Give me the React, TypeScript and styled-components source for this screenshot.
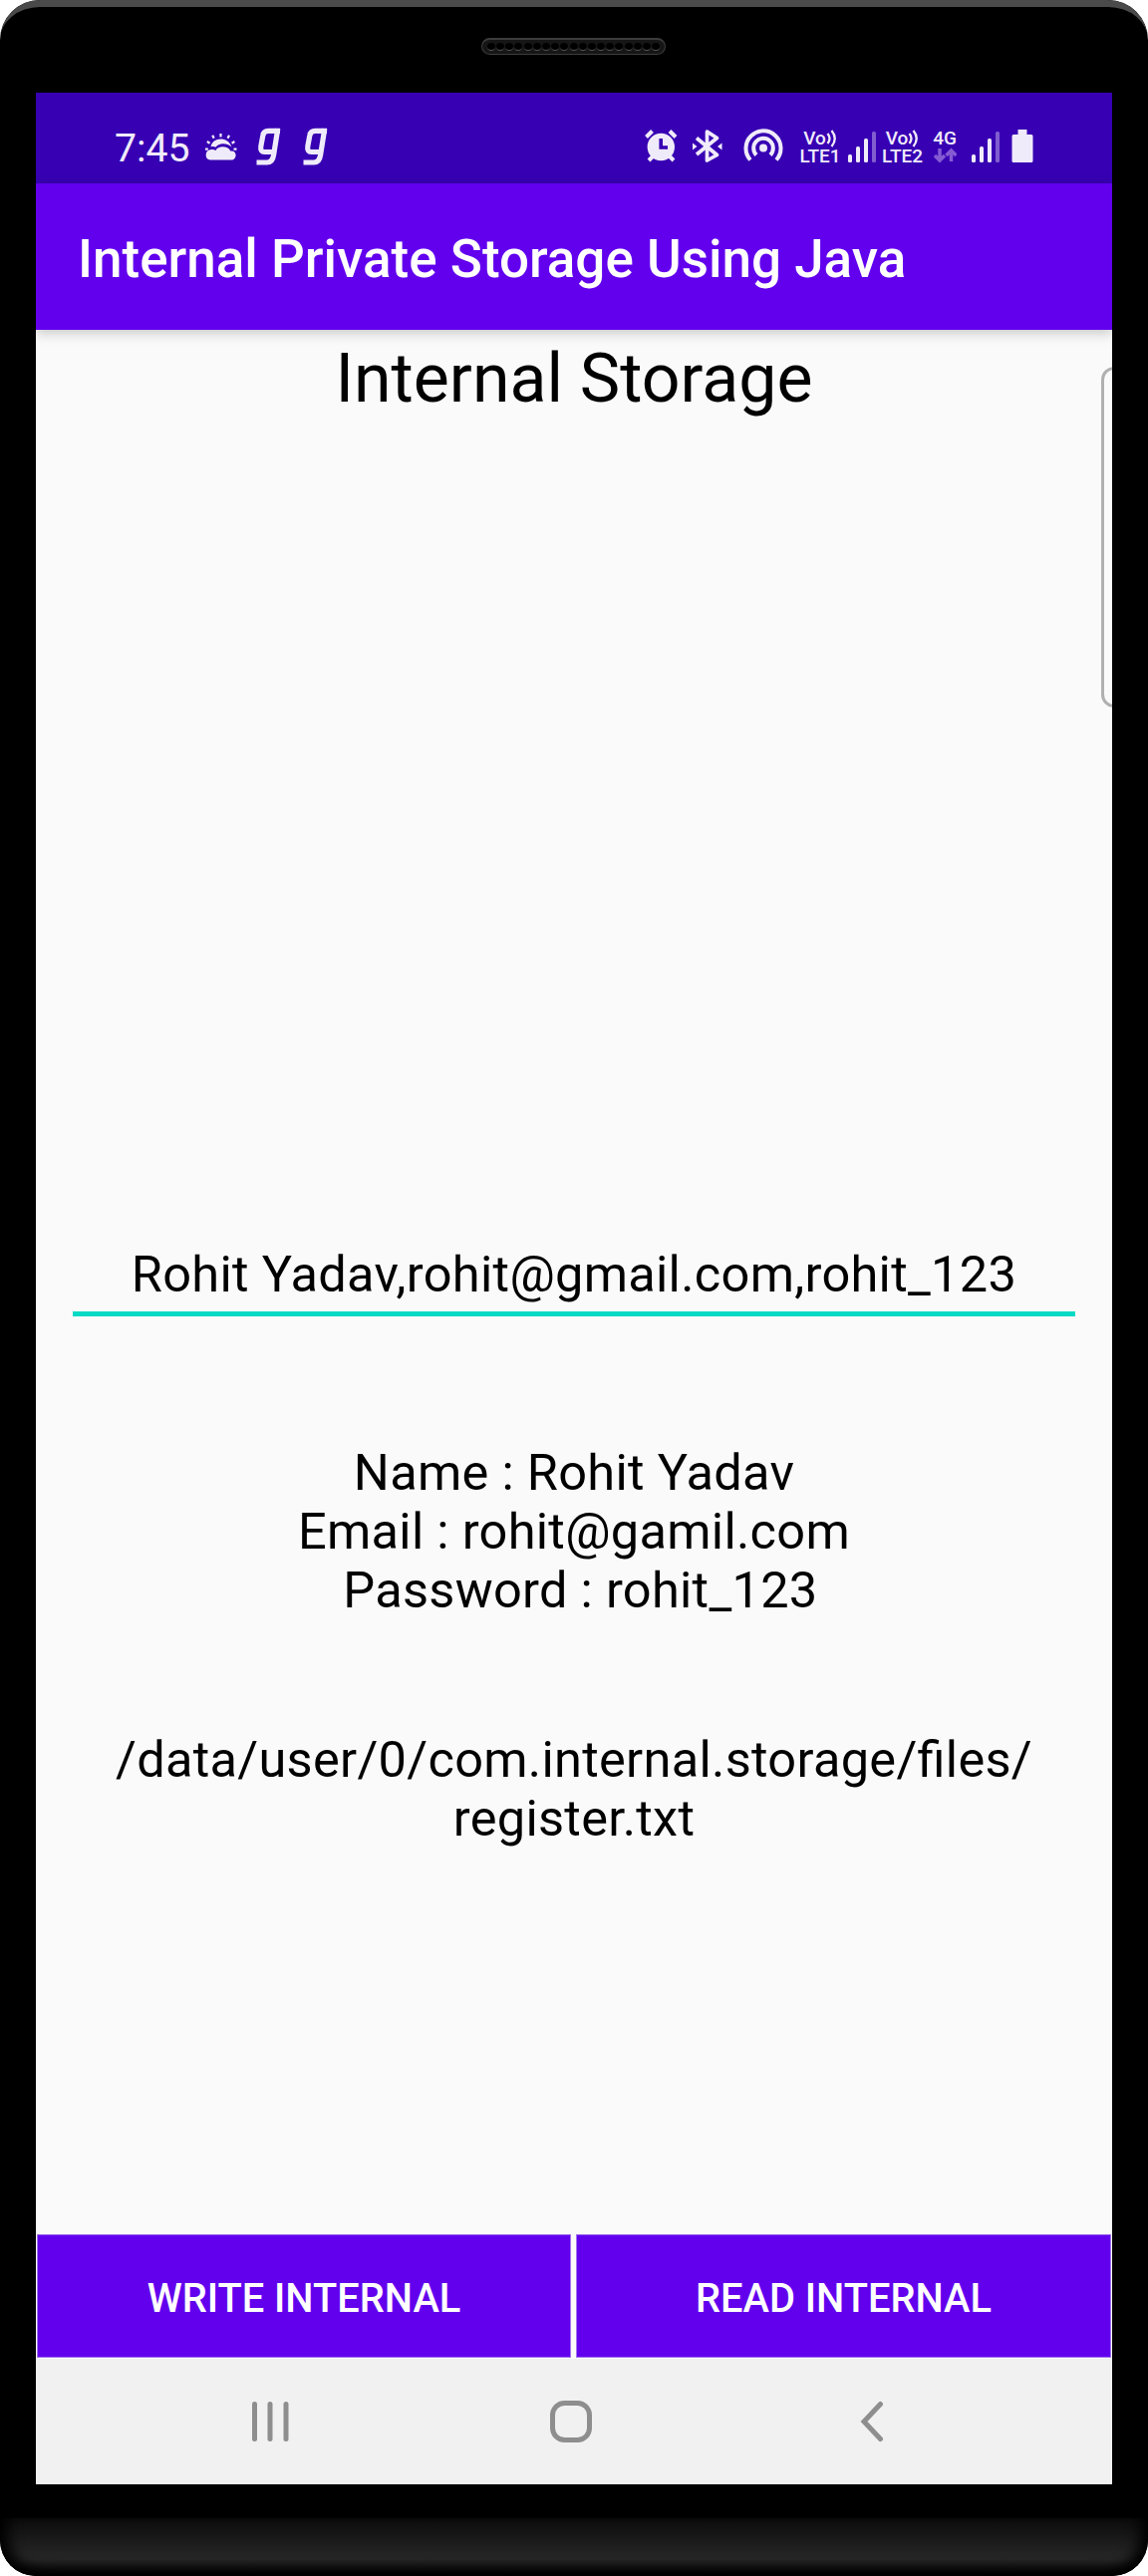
import React from 'react';
import styled, { createGlobalStyle } from 'styled-components';

const GlobalStyle = createGlobalStyle`
  * { box-sizing: border-box; }
  body { margin: 0; background: #fff; font-family: Roboto, "Liberation Sans", sans-serif; }
  svg { display: block; flex: none; }
`;

const ink = '#f0ebfa';

const Device = styled.div`
  width: 1152px;
  height: 2585px;
  display: flex;
  flex-direction: column;
  border-radius: 40px 40px 36px 36px;
  background: #000;
  overflow: hidden;
`;

const TopBezel = styled.div`
  height: 93px;
  flex: none;
  display: flex;
  justify-content: center;
  padding: 31px 1px 0 0;
  border-top: 7px solid #4a4a4a;
  border-radius: 40px 40px 0 0;
`;

const Speaker = styled.div`
  width: 185px;
  height: 17px;
  display: flex;
  align-items: center;
  justify-content: center;
  gap: 1.2px;
  border-radius: 9px;
  background: #161616;
  border: 1px solid #3c3c3c;
  border-top-width: 2px;
`;

const Hole = styled.span`
  width: 8px;
  height: 8px;
  border-radius: 50%;
  background: #000;
  border-bottom: 1px solid #555;
`;

const Screen = styled.main`
  height: 2400px;
  flex: none;
  margin: 0 36px;
  display: flex;
  flex-direction: column;
  background: #fafafa;
`;

const StatusBar = styled.div`
  height: 91px;
  flex: none;
  display: flex;
  align-items: flex-start;
  justify-content: space-between;
  padding: 35px 79px 0 79px;
  background: #3700b3;
  color: ${ink};
`;

const StatusGroup = styled.div`
  display: flex;
  align-items: flex-start;
`;

const Clock = styled.span`
  width: 77px;
  font-size: 39.2px;
  line-height: 40px;
  padding-top: 1px;
  white-space: nowrap;
`;

const Glyph = styled.svg<{ $gap?: number }>`
  margin-left: ${(p) => p.$gap ?? 0}px;
`;

const Carrier = styled.div<{ $gap: number; $width: number }>`
  width: ${(p) => p.$width}px;
  margin-left: ${(p) => p.$gap}px;
  display: flex;
  flex-direction: column;
  align-items: center;
  font-weight: 500;
  font-size: 19px;
  line-height: 17.5px;
  padding-top: 2px;
  white-space: nowrap;
`;

const VoRow = styled.span`
  display: flex;
`;

const AppBar = styled.header`
  height: 147px;
  flex: none;
  display: flex;
  align-items: center;
  padding: 4px 0 0 42px;
  background: #6200ee;
  color: #fff;
  box-shadow: 0 3px 12px rgba(0, 0, 0, 0.22);
  z-index: 1;
`;

const BarTitle = styled.h1`
  margin: 0;
  font-size: 53px;
  font-weight: 500;
  white-space: nowrap;
`;

const Content = styled.section`
  flex: 1;
  position: relative;
  display: flex;
  flex-direction: column;
  align-items: center;
  overflow: hidden;
  color: #000;
  text-align: center;
  font-size: 50.5px;
  line-height: 59px;
  letter-spacing: 0.3px;
  font-feature-settings: "liga" 1;
`;

const EdgeHandle = styled.div`
  position: absolute;
  top: 37px;
  right: -20px;
  width: 31px;
  height: 342px;
  border: 3px solid #b0b0b0;
  border-radius: 13px;
`;

const Heading = styled.h2`
  margin: 9px 0 0;
  font-size: 68px;
  font-weight: 400;
  line-height: 80px;
  letter-spacing: 0;
`;

const Field = styled.div`
  width: 1006px;
  height: 75px;
  margin-top: 826px;
  padding-top: 3px;
  border-bottom: 5px solid #03dac5;
`;

const Details = styled.div`
  margin-top: 127px;
  white-space: pre;
`;

const FilePath = styled.div`
  margin-top: 111px;
`;

const Actions = styled.div`
  height: 125px;
  flex: none;
  display: grid;
  grid-template-columns: 536px 537px;
  gap: 5px;
  padding: 0 1px 1px;
`;

const Action = styled.button`
  margin: 0;
  padding: 4px 0 0;
  border: 1px solid #a274ee;
  background: #6200ee;
  color: #fff;
  font: 500 39.8px Roboto, sans-serif;
`;

const NavBar = styled.nav`
  height: 126px;
  flex: none;
  display: flex;
  align-items: center;
  padding-left: 216px;
  background: #f1f1f1;
  color: #8e8e8e;
`;

const Chin = styled.div`
  height: 58px;
  flex: none;
  margin-top: 34px;
  border-radius: 0 0 36px 36px;
  background: linear-gradient(#0b0b0b 0%, #242424 62%, #242424 72%, #000 100%);
  box-shadow: inset 14px -6px 14px -6px #000, inset -14px -6px 14px -6px #000;
`;

const GLogo = ({ gap }: { gap: number }) => (
  <Glyph $gap={gap} width="26" height="38" viewBox="0 0 26 38" fill="none" stroke={ink} strokeWidth="5.2">
    <path d="M25 3.4H13.5Q8.5 3.4 7.8 8L5.8 19Q5 24.5 9.5 24.5H17.5M22.8 1L18.6 27.5Q17.5 35 12 35H1.5" />
  </Glyph>
);

const Signal = ({ gap }: { gap: number }) => (
  <Glyph $gap={gap} width="28" height="38" viewBox="0 0 28 38" fill={ink}>
    <rect x="0" y="27" width="4" height="8" rx="1.5" />
    <rect x="8" y="19" width="4" height="16" rx="1.5" />
    <rect x="16" y="11" width="4" height="24" rx="1.5" />
    <rect x="24" y="4" width="4" height="31" rx="1.5" opacity=".4" />
  </Glyph>
);

const VoLte = ({ sim, gap, width }: { sim: number; gap: number; width: number }) => (
  <Carrier $gap={gap} $width={width}>
    <VoRow>
      Vo
      <svg width="11" height="18" viewBox="0 0 11 18" fill="none" stroke={ink} strokeWidth="2.3">
        <path d="M1.5 4Q5.5 9 1.5 14M5.500 1Q12 9 5.500 17" />
      </svg>
    </VoRow>
    <span>LTE{sim}</span>
  </Carrier>
);

export default function App() {
  return (
    <>
      <GlobalStyle />
      <Device>
        <TopBezel>
          <Speaker>
            {Array.from({ length: 19 }, (_, i) => <Hole key={i} />)}
          </Speaker>
        </TopBezel>
        <Screen>
          <StatusBar>
            <StatusGroup>
              <Clock>7:45</Clock>
              <Glyph $gap={14} width="33" height="38" viewBox="0 0 33 38" fill={ink}>
                <path d="M5.500 19.500C7 9 23 8.500 26.500 19.500C21 14.500 13 15.500 10.500 19.800C9 18.800 7 18.900 5.500 19.500Z" />
                <path d="M5 32.500C-.8 32.500-.8 22.800 5 22.300C7 21.800 9 22 10.500 23C12.500 18 23 18 25.200 23.500C32.500 22.500 32 32.500 26 32.500Z" />
                <path
                  d="M15.500 6v3.600M7.200 7.800l1.500 3M24 7.800l-1.500 3M1.800 14l2.800 1.700M29.400 14l-2.800 1.700M-.2 21.700h3M28.500 21.700h3"
                  stroke={ink}
                  strokeWidth="2.200"
                />
              </Glyph>
              <GLogo gap={17} />
              <GLogo gap={21} />
            </StatusGroup>
            <StatusGroup>
              <Glyph width="33" height="38" viewBox="0 0 33 38">
                <circle cx="16.300" cy="19.500" r="13.700" fill={ink} />
                <path d="M1.500 9.500l6-6M31 9.500l-6-6M4 33l5-5M29 33l-5-5" fill="none" stroke={ink} strokeWidth="4" />
                <path d="M16.200 11v9H23" fill="none" stroke="#3700b3" strokeWidth="3.600" />
              </Glyph>
              <Glyph $gap={15} width="30" height="38" viewBox="0 0 30 38" fill="none" stroke={ink} strokeWidth="3.700">
                <path d="M4 10.500L24.500 27.500L14.500 33V4L24.500 10.500L4 27" strokeLinejoin="round" />
                <path d="M0 15.500l4.500 3.500L0 22.500ZM29.500 15.500L25 19l4.500 3.500Z" fill={ink} stroke="none" />
              </Glyph>
              <Glyph $gap={21} width="40" height="38" viewBox="0 0 40 38" fill="none" stroke={ink} strokeWidth="4">
                <circle cx="20" cy="20.500" r="4" fill={ink} stroke="none" />
                <path d="M7 32.500A17.500 17.500 0 1 1 33 32.500" />
                <path d="M13 27.500A9.800 9.800 0 1 1 27 27.500" />
              </Glyph>
              <VoLte sim={1} gap={17} width={40} />
              <Signal gap={8} />
              <VoLte sim={2} gap={6} width={41} />
              <Carrier $gap={10} $width={24}>
                <span>4G</span>
                <svg width="23" height="17" viewBox="0 0 23 17" fill="none" stroke="#855bd4" strokeWidth="3.500">
                  <path d="M6 1v12M1 8l5 5 5-5M17.500 14V3M12.500 8l5-5 5 5" />
                </svg>
              </Carrier>
              <Signal gap={15} />
              <Glyph $gap={12} width="22" height="38" viewBox="0 0 22 38" fill={ink}>
                <path d="M6.500 2h9v5H20a1.500 1.500 0 0 1 1.500 1.500V33.500A1.500 1.500 0 0 1 20 35H2A1.500 1.500 0 0 1 .5 33.500V8.500A1.500 1.500 0 0 1 2 7H6.500Z" />
              </Glyph>
            </StatusGroup>
          </StatusBar>
          <AppBar>
            <BarTitle>Internal Private Storage Using Java</BarTitle>
          </AppBar>
          <Content>
            <EdgeHandle />
            <Heading>Internal Storage</Heading>
            <Field>Rohit Yadav,rohit@gmail.com,rohit_123</Field>
            <Details>{'Name : Rohit Yadav\nEmail : rohit@gamil.com\n Password : rohit_123'}</Details>
            <FilePath>
              /data/user/0/com.internal.storage/files/
              <br />
              register.txt
            </FilePath>
          </Content>
          <Actions>
            <Action>WRITE INTERNAL</Action>
            <Action>READ INTERNAL</Action>
          </Actions>
          <NavBar>
            <svg width="38" height="42" viewBox="0 0 38 42" stroke="currentColor" strokeWidth="5" strokeLinecap="round">
              <path d="M3.500 3.500v35M19 3.500v35M35 3.500v35" />
            </svg>
            <Glyph $gap={262} width="42" height="42" viewBox="0 0 42 42" fill="none" stroke="currentColor" strokeWidth="5">
              <rect x="2.500" y="2.500" width="37" height="37" rx="12" />
            </Glyph>
            <Glyph $gap={269} width="24" height="42" viewBox="0 0 24 42" fill="none" stroke="currentColor" strokeWidth="5" strokeLinecap="round">
              <path d="M20.500 3.500L4 21l16.500 17.500" />
            </Glyph>
          </NavBar>
        </Screen>
        <Chin />
      </Device>
    </>
  );
}
